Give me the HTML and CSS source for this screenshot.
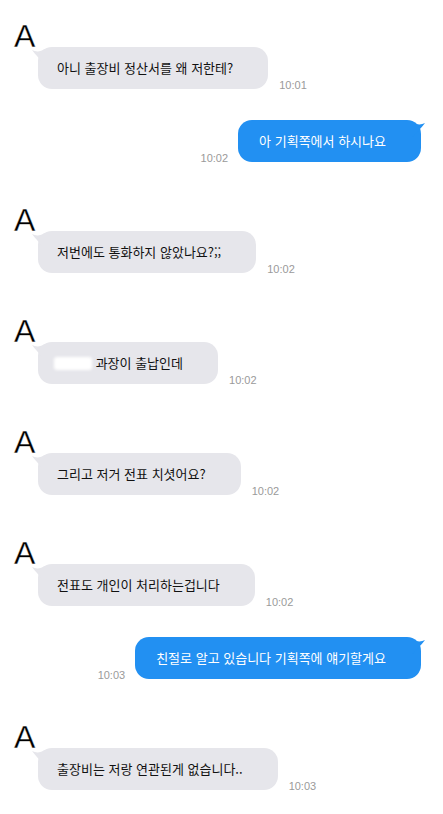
FILE: index.html
```html
<!DOCTYPE html>
<html lang="ko">
<head>
<meta charset="utf-8">
<title>대화</title>
<link rel="stylesheet" href="styles.css">
</head>
<body>
<div class="chat">
  <div class="msg in">
    <div class="avatar">A</div>
    <div class="line">
      <div class="bubble">아니 출장비 정산서를 왜 저한테?<svg class="tail" viewBox="0 0 14 16"><path d="M1 1 C5 3 9 3 14 0 L14 15 C10 12 5 6 1 1 Z"/></svg></div>
      <span class="time">10:01</span>
    </div>
  </div>

  <div class="msg out">
    <div class="line">
      <span class="time">10:02</span>
      <div class="bubble">아 기획쪽에서 하시나요<svg class="tail" viewBox="0 0 14 16"><path d="M13 1 C9 3 5 3 0 0 L0 15 C4 12 9 6 13 1 Z"/></svg></div>
    </div>
  </div>

  <div class="msg in">
    <div class="avatar">A</div>
    <div class="line">
      <div class="bubble">저번에도 통화하지 않았나요?;;<svg class="tail" viewBox="0 0 14 16"><path d="M1 1 C5 3 9 3 14 0 L14 15 C10 12 5 6 1 1 Z"/></svg></div>
      <span class="time">10:02</span>
    </div>
  </div>

  <div class="msg in">
    <div class="avatar">A</div>
    <div class="line">
      <div class="bubble"><span class="redacted"></span> 과장이 출납인데<svg class="tail" viewBox="0 0 14 16"><path d="M1 1 C5 3 9 3 14 0 L14 15 C10 12 5 6 1 1 Z"/></svg></div>
      <span class="time">10:02</span>
    </div>
  </div>

  <div class="msg in">
    <div class="avatar">A</div>
    <div class="line">
      <div class="bubble">그리고 저거 전표 치셧어요?<svg class="tail" viewBox="0 0 14 16"><path d="M1 1 C5 3 9 3 14 0 L14 15 C10 12 5 6 1 1 Z"/></svg></div>
      <span class="time">10:02</span>
    </div>
  </div>

  <div class="msg in">
    <div class="avatar">A</div>
    <div class="line">
      <div class="bubble">전표도 개인이 처리하는겁니다<svg class="tail" viewBox="0 0 14 16"><path d="M1 1 C5 3 9 3 14 0 L14 15 C10 12 5 6 1 1 Z"/></svg></div>
      <span class="time">10:02</span>
    </div>
  </div>

  <div class="msg out">
    <div class="line">
      <span class="time">10:03</span>
      <div class="bubble">친절로 알고 있습니다 기획쪽에 얘기할게요<svg class="tail" viewBox="0 0 14 16"><path d="M13 1 C9 3 5 3 0 0 L0 15 C4 12 9 6 13 1 Z"/></svg></div>
    </div>
  </div>

  <div class="msg in">
    <div class="avatar">A</div>
    <div class="line">
      <div class="bubble">출장비는 저랑 연관된게 없습니다..<svg class="tail" viewBox="0 0 14 16"><path d="M1 1 C5 3 9 3 14 0 L14 15 C10 12 5 6 1 1 Z"/></svg></div>
      <span class="time">10:03</span>
    </div>
  </div>
</div>
</body>
</html>
```

FILE: styles.css
```css
html, body {
  margin: 0;
  padding: 0;
  background: #ffffff;
}

.chat {
  display: flex;
  flex-direction: column;
  padding: 24px 0 20px;
  font-family: "Noto Sans CJK KR", "Noto Sans", sans-serif;
}

.msg.in + .msg,
.msg.out + .msg.in {
  margin-top: 46px;
}

.msg + .msg.out {
  margin-top: 31px;
}

/* sender initial above incoming bubbles */
.avatar {
  padding-left: 14px;
  font-family: "Liberation Sans", Arial, sans-serif;
  font-size: 32px;
  line-height: 24px;
  height: 24px;
  color: #000;
  -webkit-text-stroke: 0.3px #fff;
}

.line {
  display: flex;
  align-items: flex-end;
}

.msg.in .line {
  margin-left: 38px;
  margin-top: -1px;
}

.msg.out .line {
  justify-content: flex-end;
  padding-right: 22px;
}

.bubble {
  position: relative;
  font-size: 13px;
  line-height: 18px;
  height: 18px;
  padding: 12px 35px 12px 19px;
  border-radius: 14px;
  white-space: nowrap;
}

.msg.in .bubble {
  background: #e6e6eb;
  color: #111;
}

.msg.out .bubble {
  background: #2290f2;
  color: #fff;
  padding-left: 21px;
}

/* speech tail on the top corner */
.tail {
  position: absolute;
  top: 2px;
  width: 14px;
  height: 16px;
}

.msg.in .tail {
  left: -7px;
  fill: #e6e6eb;
}

.msg.out .tail {
  right: -5px;
  fill: #2290f2;
}

.time {
  font-family: "Liberation Sans", Arial, sans-serif;
  font-size: 11px;
  line-height: 13px;
  color: #9a9a9a;
  margin-bottom: -3px;
}

.msg.in .time {
  margin-left: 11px;
}

.msg.out .time {
  margin-right: 10px;
}

/* blurred-out name */
.redacted {
  display: inline-block;
  width: 38px;
  height: 13px;
  margin-left: -3px;
  vertical-align: -2px;
  background: #fff;
  border-radius: 3px;
  filter: blur(1.5px);
}
```
